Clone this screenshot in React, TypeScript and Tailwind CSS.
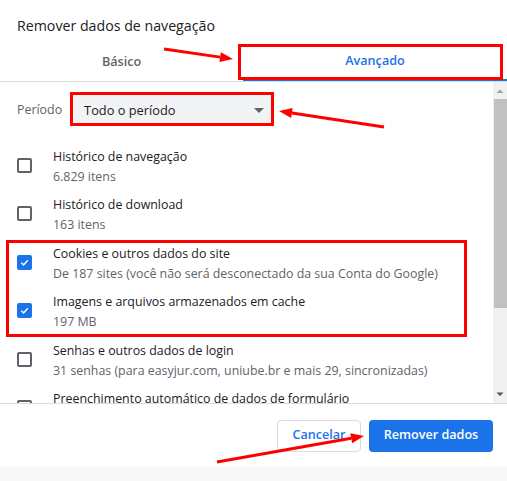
import React from 'react';

interface Item {
  title: string;
  sub: string;
  checked: boolean;
}

const items: Item[] = [
  { title: 'Histórico de navegação', sub: '6.829 itens', checked: false },
  { title: 'Histórico de download', sub: '163 itens', checked: false },
  { title: 'Cookies e outros dados do site', sub: 'De 187 sites (você não será desconectado da sua Conta do Google)', checked: true },
  { title: 'Imagens e arquivos armazenados em cache', sub: '197 MB', checked: true },
  { title: 'Senhas e outros dados de login', sub: '31 senhas (para easyjur.com, uniube.br e mais 29, sincronizadas)', checked: false },
  { title: 'Preenchimento automático de dados de formulário', sub: '', checked: false },
];

function Checkbox({ checked }: { checked: boolean }) {
  if (checked) {
    return (
      <div className="w-[15px] h-[15px] rounded-[2px] bg-[#1a73e8] flex items-center justify-center shrink-0">
        <svg width="11" height="11" viewBox="0 0 12 12">
          <path d="M2.5 6.2 L5 8.6 L9.6 3.6" stroke="white" strokeWidth="1.6" fill="none" />
        </svg>
      </div>
    );
  }
  return <div className="w-[15px] h-[15px] rounded-[2px] border-2 border-[#5f6368] shrink-0" />;
}

function Arrow({ x1, y1, x2, y2 }: { x1: number; y1: number; x2: number; y2: number }) {
  const a = Math.atan2(y2 - y1, x2 - x1);
  const len = 13;
  const w = 5;
  const bx = x2 - len * Math.cos(a);
  const by = y2 - len * Math.sin(a);
  const px = -Math.sin(a) * w;
  const py = Math.cos(a) * w;
  return (
    <g>
      <line x1={x1} y1={y1} x2={bx} y2={by} stroke="#ff0000" strokeWidth="3" />
      <polygon points={`${x2},${y2} ${bx + px},${by + py} ${bx - px},${by - py}`} fill="#ff0000" />
    </g>
  );
}

export default function App() {
  return (
    <div className="relative w-[507px] h-[481px] bg-white overflow-hidden font-['Open_Sans',sans-serif] text-[#202124]">
      <div className="h-[40px] pl-[17px] pt-[16px] text-[14.2px] leading-[20px] text-[#202124]">
        Remover dados de navegação
      </div>

      <div className="flex h-[42px] border-b border-[#dadce0]">
        <div className="w-[243px] flex items-center justify-center pt-[4px] text-[12.6px] font-semibold text-[#5f6368]">Básico</div>
        <div className="flex-1 flex items-center justify-center pt-[4px] text-[12.6px] font-semibold text-[#1a73e8] border-b-2 border-[#1a73e8]">
          Avançado
        </div>
      </div>

      <div className="flex h-[322px] border-b border-[#dadce0]">
        <div className="flex-1 overflow-hidden">
          <div className="flex items-center pl-[17px] pt-[13px] gap-[12px]">
            <span className="text-[12.4px] text-[#5f6368]">Período</span>
            <div className="w-[200px] h-[31px] rounded-[4px] bg-[#f1f3f4] flex items-center justify-between pl-[10px] pr-[10px]">
              <span className="text-[12.8px] text-[#202124]">Todo o período</span>
              <svg width="10" height="5" viewBox="0 0 10 5">
                <path d="M0 0 L10 0 L5 5 Z" fill="#5f6368" />
              </svg>
            </div>
          </div>

          <div className="mt-[15px]">
            {items.map((it) => (
              <div key={it.title} className="h-[48.5px] flex items-center pl-[17px]">
                <Checkbox checked={it.checked} />
                <div className="ml-[21px] pt-[3px] text-[12.4px] leading-[20px]">
                  <div className="h-[20px] text-[#202124] whitespace-nowrap">{it.title}</div>
                  <div className="h-[20px] text-[#5f6368] whitespace-nowrap">{it.sub}</div>
                </div>
              </div>
            ))}
          </div>
        </div>

        <div className="w-[14px] bg-[#f1f1f1] flex flex-col items-center">
          <svg width="14" height="17" viewBox="0 0 14 17" className="shrink-0">
            <path d="M3.5 11 L10.5 11 L7 7.5 Z" fill="#a3a3a3" />
          </svg>
          <div className="w-[13px] h-[209px] bg-[#c1c1c1] ml-[1px]" />
          <div className="flex-1" />
          <svg width="14" height="17" viewBox="0 0 14 17" className="shrink-0">
            <path d="M3.5 6.5 L10.5 6.5 L7 10 Z" fill="#505050" />
          </svg>
        </div>
      </div>

      <div className="h-[63px] flex items-center justify-end gap-[8px] pr-[14px]">
        <button className="w-[84px] h-[32px] rounded-[4px] border border-[#dadce0] bg-white text-[12.6px] font-semibold text-[#1a73e8]">
          Cancelar
        </button>
        <button className="w-[124px] h-[32px] rounded-[4px] bg-[#1a73e8] text-[12.6px] font-semibold text-white">
          Remover dados
        </button>
      </div>
      <div className="h-[14px] bg-[#f8f8f8]" />

      <svg className="absolute inset-0 pointer-events-none" width="507" height="481" viewBox="0 0 507 481">
        <rect x="239.5" y="45.5" width="262" height="33" fill="none" stroke="#ff0000" strokeWidth="3" />
        <rect x="71.5" y="93.5" width="201" height="31" fill="none" stroke="#ff0000" strokeWidth="3" />
        <rect x="7.5" y="241.5" width="458" height="94" fill="none" stroke="#ff0000" strokeWidth="3" />
        <Arrow x1={164} y1={49} x2={233} y2={59} />
        <Arrow x1={384} y1={127} x2={279} y2={111} />
        <Arrow x1={217} y1={462} x2={364} y2={436} />
      </svg>
    </div>
  );
}
